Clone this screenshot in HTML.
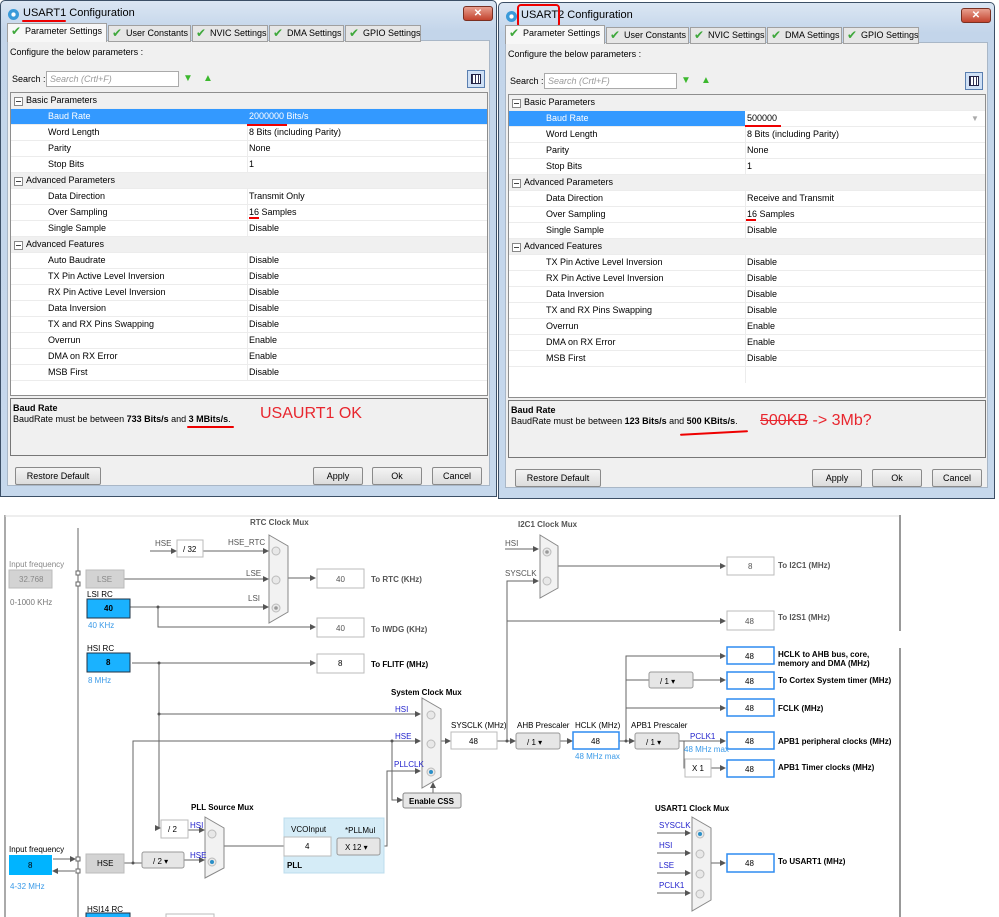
<!DOCTYPE html>
<html><head><meta charset="utf-8"><style>
*{margin:0;padding:0;box-sizing:border-box}
body{width:999px;height:917px;position:relative;overflow:hidden;background:#fff;font-family:"Liberation Sans",sans-serif;}
.a{position:absolute;white-space:nowrap}
.dlg{position:absolute;width:497px;height:497px;background:linear-gradient(#dbe6f3,#c3d5ea 30px,#c6d8ec);border:1px solid #3c4f66;border-radius:5px 5px 0 0}
.dlg .title{left:22px;top:6px;font-size:11px;color:#000}
.close{left:462px;top:5px;width:30px;height:15px;background:linear-gradient(#e8a090,#c3432e);border:1px solid #7a3022;border-radius:3px;color:#fff;font-size:10px;font-weight:bold;text-align:center;line-height:13px}
.body{left:6px;top:39px;width:483px;height:446px;background:#f0f0f0;border:1px solid #a9b7c7}
.tab{top:24px;height:17px;background:#e6e6e6;border:1px solid #a0a0a0;font-size:9px;line-height:15px;padding-left:17px;color:#000}
.tab.sel{background:#f7f7f7;height:19px;top:22px;border-bottom:none}
.tab:before{content:"✔";position:absolute;left:3px;top:0;color:#3fa83c;font-size:12px;line-height:15px}
.f9{font-size:9px}
.tbl{left:9px;top:91px;width:478px;height:304px;background:#fff;border:1px solid #8e8e8e}
.row{position:absolute;left:0;width:476px;height:16px;border-bottom:1px solid #ececec;font-size:9px;line-height:15px}
.row .l{position:absolute;left:37px}
.row .v{position:absolute;left:238px}
.row.g{background:#f0f0f0}
.row.g .l{left:15px}
.row.g:before{content:"";position:absolute;left:3px;top:4px;width:7px;height:7px;border:1px solid #888;background:#fff}
.row.g:after{content:"";position:absolute;left:5px;top:8px;width:5px;height:1px;background:#444}
.vcol{position:absolute;left:236px;top:0;width:1px;height:288px;background:#ececec}
.desc{left:9px;top:397px;width:478px;height:58px;border:1px solid #777;background:#f0f0f0;font-size:9px}
.btn{height:18px;border:1px solid #8a8a8a;border-radius:2px;background:linear-gradient(#f4f4f4,#dcdcdc);font-size:9px;text-align:center;line-height:16px}
.red{color:#e8262e;font-size:16px}
svg text{font-family:"Liberation Sans",sans-serif;font-size:8px}
</style></head><body>

<!-- Dialog 1 -->
<div class="dlg" style="left:0;top:0">
 <div class="a" style="left:7px;top:8px;width:11px;height:11px;border-radius:50%;background:radial-gradient(#fff 25%,#3a9ad9 30%)"></div>
 <div class="a title">USART1 Configuration</div>
 <div class="a" style="left:21px;top:19px;width:44px;height:2px;background:#e00;border-radius:1px"></div>
 <div class="a close">✕</div>
 <div class="a body"></div>
 <div class="a tab sel" style="left:6px;width:100px">Parameter Settings</div>
 <div class="a tab" style="left:107px;width:83px">User Constants</div>
 <div class="a tab" style="left:191px;width:76px">NVIC Settings</div>
 <div class="a tab" style="left:268px;width:75px">DMA Settings</div>
 <div class="a tab" style="left:344px;width:76px">GPIO Settings</div>
 <div class="a f9" style="left:9px;top:46px">Configure the below parameters :</div>
 <div class="a f9" style="left:11px;top:73px">Search :</div>
 <div class="a f9" style="left:45px;top:70px;width:133px;height:16px;background:#fff;border:1px solid #aaa;color:#999;font-style:italic;padding:2px 3px">Search (Crtl+F)</div>
 <div class="a" style="left:182px;top:72px;color:#3cb82e;font-size:10px">▼</div>
 <div class="a" style="left:202px;top:72px;color:#3cb82e;font-size:10px">▲</div>
 <div class="a" style="left:466px;top:69px;width:18px;height:18px;border:1px solid #5a7fb0;background:#cfe0f5"><div class="a" style="left:3px;top:3px;width:10px;height:10px;border:1px solid #224;background:repeating-linear-gradient(90deg,#335 0 1px,#fff 1px 3px)"></div></div>
 <div class="a tbl">
  <div class="vcol"></div>
  <div class="row g" style="top:0"><span class="l">Basic Parameters</span></div>
  <div class="row" style="top:16px;background:#3399ff;color:#fff"><span class="l">Baud Rate</span><span class="v">2000000 Bits/s</span></div>
  <div class="row" style="top:32px"><span class="l">Word Length</span><span class="v">8 Bits (including Parity)</span></div>
  <div class="row" style="top:48px"><span class="l">Parity</span><span class="v">None</span></div>
  <div class="row" style="top:64px"><span class="l">Stop Bits</span><span class="v">1</span></div>
  <div class="row g" style="top:80px"><span class="l">Advanced Parameters</span></div>
  <div class="row" style="top:96px"><span class="l">Data Direction</span><span class="v">Transmit Only</span></div>
  <div class="row" style="top:112px"><span class="l">Over Sampling</span><span class="v">16 Samples</span></div>
  <div class="row" style="top:128px"><span class="l">Single Sample</span><span class="v">Disable</span></div>
  <div class="row g" style="top:144px"><span class="l">Advanced Features</span></div>
  <div class="row" style="top:160px"><span class="l">Auto Baudrate</span><span class="v">Disable</span></div>
  <div class="row" style="top:176px"><span class="l">TX Pin Active Level Inversion</span><span class="v">Disable</span></div>
  <div class="row" style="top:192px"><span class="l">RX Pin Active Level Inversion</span><span class="v">Disable</span></div>
  <div class="row" style="top:208px"><span class="l">Data Inversion</span><span class="v">Disable</span></div>
  <div class="row" style="top:224px"><span class="l">TX and RX Pins Swapping</span><span class="v">Disable</span></div>
  <div class="row" style="top:240px"><span class="l">Overrun</span><span class="v">Enable</span></div>
  <div class="row" style="top:256px"><span class="l">DMA on RX Error</span><span class="v">Enable</span></div>
  <div class="row" style="top:272px"><span class="l">MSB First</span><span class="v">Disable</span></div>
 </div>
 <div class="a" style="left:246px;top:123px;width:40px;height:2px;background:#e00"></div>
 <div class="a" style="left:248px;top:216px;width:10px;height:2px;background:#e00"></div>
 <div class="a desc"><div class="a" style="left:2px;top:4px;font-weight:bold">Baud Rate</div><div class="a" style="left:2px;top:15px">BaudRate must be between <b>733 Bits/s</b> and <b>3 MBits/s</b>.</div></div>
 <div class="a" style="left:186px;top:425px;width:47px;height:2px;background:#e00;border-radius:2px"></div>
 <div class="a red" style="left:259px;top:404px">USAURT1 OK</div>
 <div class="a btn" style="left:14px;top:466px;width:86px">Restore Default</div>
 <div class="a btn" style="left:312px;top:466px;width:50px">Apply</div>
 <div class="a btn" style="left:371px;top:466px;width:50px">Ok</div>
 <div class="a btn" style="left:431px;top:466px;width:50px">Cancel</div>
</div>

<!-- Dialog 2 -->
<div class="dlg" style="left:498px;top:2px">
 <div class="a" style="left:7px;top:8px;width:11px;height:11px;border-radius:50%;background:radial-gradient(#fff 25%,#3a9ad9 30%)"></div>
 <div class="a title">USART2 Configuration</div>
 <div class="a" style="left:18px;top:1px;width:43px;height:24px;border:2px solid #e00;border-radius:4px"></div>
 <div class="a close">✕</div>
 <div class="a body"></div>
 <div class="a tab sel" style="left:6px;width:100px">Parameter Settings</div>
 <div class="a tab" style="left:107px;width:83px">User Constants</div>
 <div class="a tab" style="left:191px;width:76px">NVIC Settings</div>
 <div class="a tab" style="left:268px;width:75px">DMA Settings</div>
 <div class="a tab" style="left:344px;width:76px">GPIO Settings</div>
 <div class="a f9" style="left:9px;top:46px">Configure the below parameters :</div>
 <div class="a f9" style="left:11px;top:73px">Search :</div>
 <div class="a f9" style="left:45px;top:70px;width:133px;height:16px;background:#fff;border:1px solid #aaa;color:#999;font-style:italic;padding:2px 3px">Search (Crtl+F)</div>
 <div class="a" style="left:182px;top:72px;color:#3cb82e;font-size:10px">▼</div>
 <div class="a" style="left:202px;top:72px;color:#3cb82e;font-size:10px">▲</div>
 <div class="a" style="left:466px;top:69px;width:18px;height:18px;border:1px solid #5a7fb0;background:#cfe0f5"><div class="a" style="left:3px;top:3px;width:10px;height:10px;border:1px solid #224;background:repeating-linear-gradient(90deg,#335 0 1px,#fff 1px 3px)"></div></div>
 <div class="a tbl">
  <div class="vcol"></div>
  <div class="row g" style="top:0"><span class="l">Basic Parameters</span></div>
  <div class="row" style="top:16px;background:linear-gradient(90deg,#3399ff 0 236px,#fff 236px);"><span class="l" style="color:#fff">Baud Rate</span><span class="v">500000</span><span class="a" style="left:462px;top:0;color:#aaa;font-size:8px">▼</span></div>
  <div class="row" style="top:32px"><span class="l">Word Length</span><span class="v">8 Bits (including Parity)</span></div>
  <div class="row" style="top:48px"><span class="l">Parity</span><span class="v">None</span></div>
  <div class="row" style="top:64px"><span class="l">Stop Bits</span><span class="v">1</span></div>
  <div class="row g" style="top:80px"><span class="l">Advanced Parameters</span></div>
  <div class="row" style="top:96px"><span class="l">Data Direction</span><span class="v">Receive and Transmit</span></div>
  <div class="row" style="top:112px"><span class="l">Over Sampling</span><span class="v">16 Samples</span></div>
  <div class="row" style="top:128px"><span class="l">Single Sample</span><span class="v">Disable</span></div>
  <div class="row g" style="top:144px"><span class="l">Advanced Features</span></div>
  <div class="row" style="top:160px"><span class="l">TX Pin Active Level Inversion</span><span class="v">Disable</span></div>
  <div class="row" style="top:176px"><span class="l">RX Pin Active Level Inversion</span><span class="v">Disable</span></div>
  <div class="row" style="top:192px"><span class="l">Data Inversion</span><span class="v">Disable</span></div>
  <div class="row" style="top:208px"><span class="l">TX and RX Pins Swapping</span><span class="v">Disable</span></div>
  <div class="row" style="top:224px"><span class="l">Overrun</span><span class="v">Enable</span></div>
  <div class="row" style="top:240px"><span class="l">DMA on RX Error</span><span class="v">Enable</span></div>
  <div class="row" style="top:256px"><span class="l">MSB First</span><span class="v">Disable</span></div>
 </div>
 <div class="a" style="left:246px;top:122px;width:36px;height:2px;background:#e00"></div>
 <div class="a" style="left:247px;top:216px;width:10px;height:2px;background:#e00"></div>
 <div class="a desc"><div class="a" style="left:2px;top:4px;font-weight:bold">Baud Rate</div><div class="a" style="left:2px;top:15px">BaudRate must be between <b>123 Bits/s</b> and <b>500 KBits/s</b>.</div></div>
 <div class="a" style="left:181px;top:429px;width:68px;height:2px;background:#e00;border-radius:2px;transform:rotate(-3deg)"></div>
 <div class="a red" style="left:261px;top:409px"><s>500KB</s> -&gt; 3Mb?</div>
 <div class="a btn" style="left:16px;top:466px;width:86px">Restore Default</div>
 <div class="a btn" style="left:313px;top:466px;width:50px">Apply</div>
 <div class="a btn" style="left:373px;top:466px;width:50px">Ok</div>
 <div class="a btn" style="left:433px;top:466px;width:50px">Cancel</div>
</div>

<!-- Clock diagram -->
<svg class="a" style="left:0;top:0" width="999" height="917" viewBox="0 0 999 917">
<defs><marker id="ar" markerWidth="6" markerHeight="6" refX="5" refY="3" orient="auto"><path d="M0,0 L6,3 L0,6 z" fill="#555"/></marker></defs>
<g stroke="#999" fill="none">
 <line x1="5" y1="515" x2="5" y2="917" stroke-width="2" stroke="#aaa"/>
 <line x1="5" y1="516" x2="900" y2="516" stroke="#ddd"/>
 <line x1="78" y1="528" x2="78" y2="917" stroke-width="1.5"/>
 <line x1="900" y1="515" x2="900" y2="631" stroke-width="2"/>
 <line x1="900" y1="648" x2="900" y2="917" stroke-width="2"/>
</g>
<g stroke="#666" fill="none" stroke-width="1">
 <line x1="150" y1="551" x2="176" y2="551" marker-end="url(#ar)"/>
 <line x1="203" y1="551" x2="268" y2="551" marker-end="url(#ar)"/>
 <line x1="124" y1="579" x2="268" y2="579" marker-end="url(#ar)"/>
 <line x1="130" y1="607" x2="268" y2="607" marker-end="url(#ar)"/>
 <polyline points="158,607 158,627 315,627" marker-end="url(#ar)"/>
 <line x1="288" y1="578" x2="315" y2="578" marker-end="url(#ar)"/>
 <line x1="132" y1="663" x2="315" y2="663" marker-end="url(#ar)"/>
 <line x1="159" y1="663" x2="159" y2="828"/>
 <line x1="159" y1="828" x2="160" y2="828" marker-end="url(#ar)"/>
 <line x1="159" y1="714" x2="420" y2="714" marker-end="url(#ar)"/>
 <polyline points="133,863 133,741 420,741" marker-end="url(#ar)"/>
 <line x1="124" y1="863" x2="142" y2="863"/>
 <line x1="184" y1="860" x2="204" y2="860" marker-end="url(#ar)"/>
 <line x1="188" y1="830" x2="204" y2="830" marker-end="url(#ar)"/>
 <line x1="224" y1="846" x2="284" y2="846"/>
 <polyline points="381,846 387,846 387,771 420,771" marker-end="url(#ar)"/>
 <polyline points="392,741 392,800 402,800" marker-end="url(#ar)"/>
 <line x1="433" y1="793" x2="433" y2="783" marker-end="url(#ar)"/>
 <line x1="441" y1="741" x2="450" y2="741" marker-end="url(#ar)"/>
 <line x1="497" y1="741" x2="515" y2="741" marker-end="url(#ar)"/>
 <line x1="560" y1="741" x2="572" y2="741" marker-end="url(#ar)"/>
 <line x1="619" y1="741" x2="634" y2="741" marker-end="url(#ar)"/>
 <polyline points="626,741 626,656 725,656" marker-end="url(#ar)"/>
 <line x1="626" y1="708" x2="725" y2="708" marker-end="url(#ar)"/>
 <line x1="626" y1="680" x2="649" y2="680"/>
 <line x1="693" y1="680" x2="725" y2="680" marker-end="url(#ar)"/>
 <line x1="679" y1="741" x2="725" y2="741" marker-end="url(#ar)"/>
 <polyline points="684,741 684,768 685,768"/>
 <line x1="711" y1="768" x2="725" y2="768" marker-end="url(#ar)"/>
 <line x1="505" y1="549" x2="538" y2="549" marker-end="url(#ar)"/>
 <polyline points="507,741 507,581 538,581" marker-end="url(#ar)"/>
 <line x1="558" y1="566" x2="725" y2="566" marker-end="url(#ar)"/>
 <line x1="507" y1="621" x2="725" y2="621" marker-end="url(#ar)"/>
 <line x1="657" y1="833" x2="690" y2="833" marker-end="url(#ar)"/>
 <line x1="657" y1="853" x2="690" y2="853" marker-end="url(#ar)"/>
 <line x1="657" y1="873" x2="690" y2="873" marker-end="url(#ar)"/>
 <line x1="657" y1="893" x2="690" y2="893" marker-end="url(#ar)"/>
 <line x1="711" y1="863" x2="725" y2="863" marker-end="url(#ar)"/>
 <line x1="53" y1="859" x2="75" y2="859" marker-end="url(#ar)"/>
 <line x1="75" y1="871" x2="53" y2="871" marker-end="url(#ar)"/>
</g>
<g fill="#555"><circle cx="158" cy="607" r="1.5"/><circle cx="159" cy="663" r="1.5"/><circle cx="159" cy="714" r="1.5"/><circle cx="133" cy="863" r="1.5"/><circle cx="392" cy="741" r="1.5"/><circle cx="626" cy="741" r="1.5"/><circle cx="507" cy="741" r="1.5"/></g>
<g fill="#fff" stroke="#666"><rect x="76" y="571" width="4" height="4"/><rect x="76" y="582" width="4" height="4"/><rect x="76" y="857" width="4" height="4"/><rect x="76" y="869" width="4" height="4"/></g>
<g fill="#f2f2f2" stroke="#888">
 <polygon points="269,535 288,546 288,612 269,623"/>
 <polygon points="422,698 441,709 441,777 422,788"/>
 <polygon points="540,535 558,546 558,588 540,598"/>
 <polygon points="205,817 224,828 224,868 205,878"/>
 <polygon points="692,817 711,828 711,900 692,911"/>
</g>
<g fill="#e8e8e8" stroke="#bbb">
 <circle cx="276" cy="551" r="4"/><circle cx="276" cy="580" r="4"/><circle cx="276" cy="608" r="4"/>
 <circle cx="431" cy="715" r="4"/><circle cx="431" cy="744" r="4"/><circle cx="431" cy="772" r="4"/>
 <circle cx="547" cy="552" r="4"/><circle cx="547" cy="581" r="4"/>
 <circle cx="212" cy="834" r="4"/><circle cx="212" cy="862" r="4"/>
 <circle cx="700" cy="834" r="4"/><circle cx="700" cy="854" r="4"/><circle cx="700" cy="874" r="4"/><circle cx="700" cy="894" r="4"/>
</g>
<g fill="#2a8fc8"><circle cx="431" cy="772" r="2"/><circle cx="212" cy="862" r="2"/><circle cx="700" cy="834" r="2"/></g>
<g fill="#999"><circle cx="276" cy="608" r="1.8"/><circle cx="547" cy="552" r="1.8"/></g>
<g stroke="#bbb" fill="#fff">
 <rect x="177" y="540" width="26" height="17"/>
 <rect x="317" y="569" width="47" height="19"/>
 <rect x="317" y="618" width="47" height="19"/>
 <rect x="317" y="654" width="47" height="19"/>
 <rect x="727" y="557" width="47" height="18"/>
 <rect x="727" y="611" width="47" height="19"/>
 <rect x="451" y="732" width="46" height="17"/>
 <rect x="161" y="820" width="27" height="18"/>
 <rect x="685" y="759" width="26" height="18"/>
</g>
<g stroke="#2f8cf0" stroke-width="1.5" fill="#fff">
 <rect x="573" y="732" width="46" height="17"/>
 <rect x="727" y="647" width="47" height="17"/>
 <rect x="727" y="672" width="47" height="17"/>
 <rect x="727" y="699" width="47" height="17"/>
 <rect x="727" y="732" width="47" height="17"/>
 <rect x="727" y="760" width="47" height="17"/>
 <rect x="727" y="854" width="47" height="18"/>
</g>
<g fill="#d3d3d3" stroke="#bbb"><rect x="9" y="570" width="43" height="18"/><rect x="86" y="570" width="38" height="18"/><rect x="86" y="854" width="38" height="19"/></g>
<g fill="#1ab2ff" stroke="#234"><rect x="87" y="599" width="43" height="19"/><rect x="87" y="653" width="43" height="19"/><rect x="86" y="913" width="44" height="6"/></g>
<rect x="9" y="855" width="43" height="20" fill="#00b4ff"/>
<rect x="166" y="914" width="48" height="4" fill="#fff" stroke="#bbb"/>
<g fill="#e6e6e6" stroke="#999">
 <rect x="516" y="733" width="44" height="16" rx="2"/><rect x="635" y="733" width="44" height="16" rx="2"/>
 <rect x="649" y="672" width="44" height="16" rx="2"/><rect x="142" y="852" width="42" height="16" rx="2"/>
</g>
<rect x="284" y="818" width="100" height="55" fill="#d5ecf7" stroke="#bcdcec"/>
<rect x="284" y="837" width="47" height="19" fill="#fff" stroke="#bbb"/>
<rect x="337" y="838" width="43" height="17" fill="#e6e6e6" stroke="#999" rx="2"/>
<rect x="403" y="793" width="58" height="15" fill="#e6e6e6" stroke="#888" rx="2"/>
<g fill="#555">
 <text x="9" y="567" fill="#888" font-size="7">Input frequency</text>
 <text x="19" y="582" fill="#888">32.768</text>
 <text x="10" y="605" fill="#777" font-size="7">0-1000 KHz</text>
 <text x="97" y="582" fill="#888" font-size="9">LSE</text>
 <text x="87" y="597" fill="#000" font-size="7.5">LSI RC</text>
 <text x="104" y="611" fill="#000" font-weight="bold">40</text>
 <text x="88" y="628" fill="#3a9ae8">40 KHz</text>
 <text x="87" y="651" fill="#000" font-size="7.5">HSI RC</text>
 <text x="106" y="665" fill="#000" font-weight="bold">8</text>
 <text x="88" y="683" fill="#3a9ae8">8 MHz</text>
 <text x="250" y="525" font-weight="bold">RTC Clock Mux</text>
 <text x="155" y="546">HSE</text>
 <text x="183" y="552" fill="#000">/ 32</text>
 <text x="228" y="545">HSE_RTC</text>
 <text x="246" y="576">LSE</text>
 <text x="248" y="601">LSI</text>
 <text x="336" y="582">40</text>
 <text x="371" y="582" font-weight="bold">To RTC (KHz)</text>
 <text x="336" y="631">40</text>
 <text x="371" y="632" font-weight="bold">To IWDG (KHz)</text>
 <text x="338" y="666" fill="#000">8</text>
 <text x="371" y="667" font-weight="bold" fill="#000">To FLITF (MHz)</text>
 <text x="391" y="695" font-weight="bold" fill="#000">System Clock Mux</text>
 <text x="395" y="712" fill="#22c">HSI</text>
 <text x="395" y="739" fill="#22c">HSE</text>
 <text x="394" y="767" fill="#22c" font-size="7.5">PLLCLK</text>
 <text x="409" y="804" font-weight="bold" fill="#000">Enable CSS</text>
 <text x="451" y="728" fill="#000" font-size="7.5">SYSCLK (MHz)</text>
 <text x="469" y="744" fill="#000">48</text>
 <text x="517" y="728" fill="#000" font-size="7.5">AHB Prescaler</text>
 <text x="527" y="745" fill="#000">/ 1   ▾</text>
 <text x="575" y="728" fill="#000" font-size="7.5">HCLK (MHz)</text>
 <text x="591" y="744" fill="#000">48</text>
 <text x="575" y="759" fill="#3a9ae8">48 MHz max</text>
 <text x="631" y="728" fill="#000" font-size="7.5">APB1 Prescaler</text>
 <text x="646" y="745" fill="#000">/ 1   ▾</text>
 <text x="660" y="684" fill="#000">/ 1   ▾</text>
 <text x="690" y="739" fill="#22c">PCLK1</text>
 <text x="684" y="752" fill="#3a9ae8">48 MHz max</text>
 <text x="692" y="771" fill="#000">X 1</text>
 <text x="518" y="527" font-weight="bold">I2C1 Clock Mux</text>
 <text x="505" y="546">HSI</text>
 <text x="505" y="576">SYSCLK</text>
 <text x="748" y="569">8</text>
 <text x="778" y="568" font-weight="bold">To I2C1 (MHz)</text>
 <text x="745" y="624">48</text>
 <text x="778" y="620" font-weight="bold">To I2S1 (MHz)</text>
 <g fill="#000">
 <text x="745" y="659">48</text><text x="745" y="684">48</text><text x="745" y="711">48</text><text x="745" y="744">48</text><text x="745" y="772">48</text><text x="745" y="866">48</text>
 </g>
 <g fill="#000" font-weight="bold">
 <text x="778" y="657">HCLK to AHB bus, core,</text>
 <text x="778" y="666">memory and DMA (MHz)</text>
 <text x="778" y="683">To Cortex System timer (MHz)</text>
 <text x="778" y="711">FCLK (MHz)</text>
 <text x="778" y="744">APB1 peripheral clocks (MHz)</text>
 <text x="778" y="770">APB1 Timer clocks (MHz)</text>
 <text x="655" y="811">USART1 Clock Mux</text>
 <text x="778" y="864">To USART1 (MHz)</text>
 <text x="191" y="810">PLL Source Mux</text>
 <text x="287" y="868">PLL</text>
 </g>
 <g fill="#22c"><text x="659" y="828">SYSCLK</text><text x="659" y="848">HSI</text><text x="659" y="868">LSE</text><text x="659" y="888">PCLK1</text><text x="190" y="828">HSI</text><text x="190" y="858">HSE</text></g>
 <text x="168" y="832" fill="#000">/ 2</text>
 <text x="153" y="864" fill="#000">/ 2    ▾</text>
 <text x="97" y="866" fill="#000" font-size="9">HSE</text>
 <text x="9" y="852" fill="#000" font-size="7">Input frequency</text>
 <text x="28" y="868" fill="#000">8</text>
 <text x="10" y="889" fill="#3a9ae8" font-size="7">4-32 MHz</text>
 <text x="291" y="832" fill="#000" font-size="7.5">VCOInput</text>
 <text x="345" y="833" fill="#000" font-size="7.5">*PLLMul</text>
 <text x="305" y="849" fill="#000">4</text>
 <text x="345" y="850" fill="#000">X 12   ▾</text>
 <text x="87" y="912" fill="#000" font-size="7.5">HSI14 RC</text>
</g>
</svg>
</body></html>
